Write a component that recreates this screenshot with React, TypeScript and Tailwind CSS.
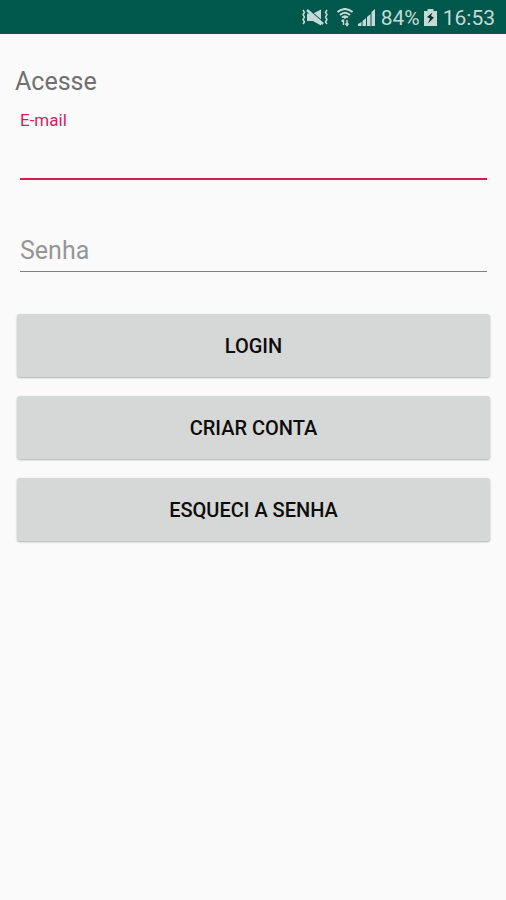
const VibrateMutedIcon = () => (
  <svg width="28" height="20" viewBox="0 0 28 20" fill="none" stroke="currentColor" aria-hidden="true">
    <path d="M2 2l1.500 2.500-1.500 2 1.500 2.500-1.500 2.500 1.500 2.500-1.500 2M26 2l-1.500 2.500 1.500 2-1.500 2.500 1.500 2.500-1.500 2.500 1.500 2" strokeWidth="1.500" />
    <path d="M6 5.500h6l8-4v16l-8-4.500H6z" fill="currentColor" stroke="none" />
    <path d="M7 1l15 13" stroke="#00574b" strokeWidth="1.500" />
    <path d="M6 2l16 14" strokeWidth="2.500" />
  </svg>
);

const WifiIcon = () => (
  <svg width="16" height="20" viewBox="0 0 16 20" fill="none" stroke="currentColor" aria-hidden="true">
    <path d="M0.500 4q7.500-6 15 0M3 7q5-4.500 10 0M5 9.500q3-2.500 6 0" strokeWidth="2" />
    <path d="M6 8.500h4l-2 3z" fill="currentColor" stroke="none" />
    <path d="M6.500 17v-5M4.500 13.500l2-2M10 12v5M8.500 15.500l1.500 2 1.500-2" strokeWidth="1.500" />
  </svg>
);

const SignalIcon = () => (
  <svg width="18" height="20" viewBox="0 0 18 20" fill="currentColor" aria-hidden="true">
    <path d="M0 18v-2l3.500-2v4zM4.500 13l3.500-3v8H4.500zM9 9l3.500-3v12H9zM13.500 4L17 1v17h-3.500z" />
  </svg>
);

const BatteryIcon = () => (
  <svg width="13" height="20" viewBox="0 0 13 20" fill="currentColor" aria-hidden="true">
    <path d="M3.500 1h6v2H13v15H0V3h3.500z" />
    <path d="M8.500 4.500L3 9l3 1.500L4 15.500l6-6-3-1.500z" fill="#00352e" />
  </svg>
);

const StatusBar = () => (
  <header className="flex h-[34px] items-center justify-end bg-[#00574b] pt-px pr-[11px] text-[21px] leading-6 text-[#c5dad7]">
    <VibrateMutedIcon />
    <div className="mr-[5px] ml-2 flex items-center gap-[5px]">
      <WifiIcon />
      <SignalIcon />
    </div>
    <span>84%</span>
    <div className="ml-1 flex items-center gap-1.5">
      <BatteryIcon />
      <span>16:53</span>
    </div>
  </header>
);

const actions = ['Login', 'Criar conta', 'Esqueci a senha'];

export default function App() {
  return (
    <div className="min-h-screen bg-[#fafafa] font-[Roboto,sans-serif]">
      <StatusBar />
      <main className="pt-8 pr-3.5 pl-[15px]">
        <h1 className="text-[25px] leading-8 text-[#707070]">Acesse</h1>
        <form onSubmit={(e) => e.preventDefault()}>
          <div className="mx-[5px] pt-3">
            <label htmlFor="email" className="block text-[17px] leading-5 text-[#d81b60]">
              E-mail
            </label>
            <input
              id="email"
              type="email"
              className="block h-[50px] w-full border-b-2 border-[#d0204c] bg-transparent text-[25px] outline-none"
            />
          </div>
          <div className="mx-[5px] pt-[50px]">
            <input
              id="senha"
              type="password"
              aria-label="Senha"
              placeholder="Senha"
              className="block h-[42px] w-full border-b border-[#808080] bg-transparent text-[25px] outline-none placeholder:text-[#969696]"
            />
          </div>
          <div className="mx-0.5 mt-[42px] flex flex-col gap-[19px]">
            {actions.map((action) => (
              <button
                key={action}
                type="button"
                className="h-[63px] w-full rounded-[3px] bg-[#d6d7d7] text-xl font-medium text-[#0c0c0c] uppercase shadow-[0_1px_2px_rgba(0,0,0,0.3)]"
              >
                {action}
              </button>
            ))}
          </div>
        </form>
      </main>
    </div>
  );
}
